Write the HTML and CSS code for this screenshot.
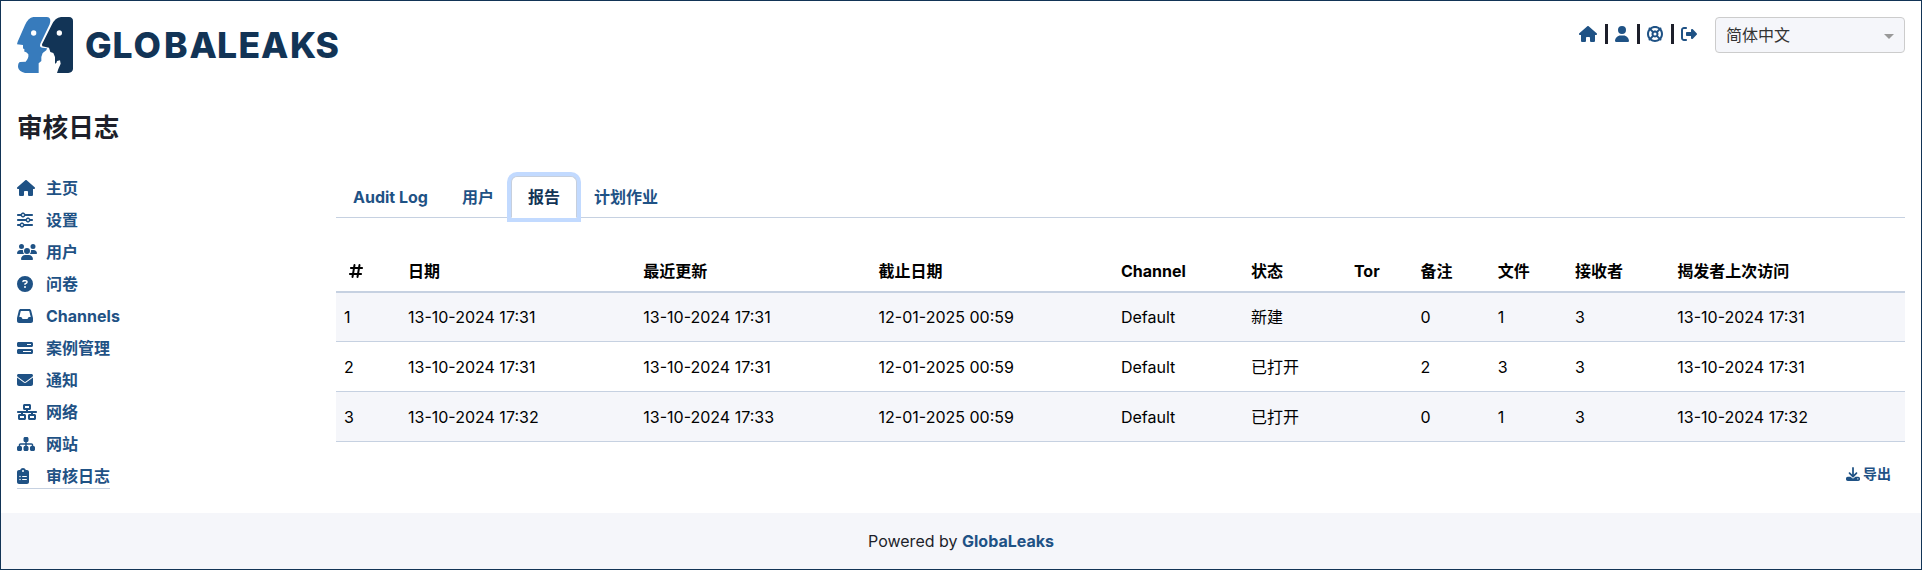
FILE: index.html
```html
<!DOCTYPE html>
<html lang="zh-CN">
<head>
<meta charset="utf-8">
<title>审核日志</title>
<link rel="stylesheet" href="styles.css">
</head>
<body>
<div class="page">
  <header class="header">
    <div class="logo">
      <svg class="logo-mark" viewBox="0 0 168 168">
        <path fill="#377bbc" d="M49 0H89Q100 0 100 12L98 22 70 80Q66 90 76 92L90 94 88 100 77 108 73 120V132L65 139V168H24Q5 164 3 150Q3 137 9 135L26 134Q36 124 34 112Q30 106 21 103L23 98 18 94V84L0 82 2 74 24 24Q34 2 49 0Z"/>
        <path fill="#123456" d="M132 0H156Q168 1 168 12V156Q167 167 154 168H120L124 156 131 140 129 130 120 132 118 138 114 140V120L109 108 100 105 96 92 76 88 75 82 80 72 104 24Q114 2 132 0Z"/>
        <circle cx="50" cy="48" r="8" fill="#fff"/><circle cx="127" cy="48" r="8" fill="#fff"/>
      </svg>
      <svg class="logo-word" viewBox="0 0 256 40"><text x="-1 26.5 47.5 78 103.5 131 152.5 175 204 229.5" y="31.5">GLOBALEAKS</text></svg>
    </div>
    <div class="tools">
      <nav class="shortcuts">
        <svg class="icon" viewBox="0 0 576 512"><use href="#house"/></svg><i class="sep"></i>
        <svg class="icon" viewBox="0 0 448 512"><path d="M224 256A128 128 0 1 0 224 0a128 128 0 1 0 0 256zm-45.7 48C79.8 304 0 383.8 0 482.3C0 498.7 13.3 512 29.7 512H418.3c16.4 0 29.7-13.3 29.7-29.7C448 383.8 368.2 304 269.7 304H178.3z"/></svg><i class="sep"></i>
        <svg class="icon" viewBox="0 0 512 512"><path d="M367.2 412.5C335.9 434.9 297.5 448 256 448s-79.9-13.1-111.2-35.5l58-58c15.8 8.6 34 13.5 53.3 13.5s37.4-4.9 53.3-13.5l58 58zm90.7 .8c33.8-43.4 54-98 54-157.3s-20.2-113.9-54-157.3c9-12.5 7.9-30.1-3.4-41.3S425.8 45 413.3 54C369.9 20.2 315.3 0 256 0S142.1 20.2 98.7 54c-12.5-9-30.1-7.9-41.3 3.4S45 86.2 54 98.7C20.2 142.1 0 196.7 0 256s20.2 113.9 54 157.3c-9 12.5-7.9 30.1 3.4 41.3S86.2 467 98.7 458c43.4 33.8 98 54 157.3 54s113.9-20.2 157.3-54c12.5 9 30.1 7.9 41.3-3.4s12.4-28.8 3.4-41.3zm-45.5-46.1l-58-58c8.6-15.8 13.5-34 13.5-53.3s-4.9-37.4-13.5-53.3l58-58C434.9 176.1 448 214.5 448 256s-13.1 79.9-35.5 111.2zM367.2 99.5l-58 58c-15.8-8.6-34-13.5-53.3-13.5s-37.4 4.9-53.3 13.5l-58-58C176.1 77.1 214.5 64 256 64s79.9 13.1 111.2 35.5zM157.5 309.3l-58 58C77.1 335.9 64 297.5 64 256s13.1-79.9 35.5-111.2l58 58c-8.6 15.8-13.5 34-13.5 53.3s4.9 37.4 13.5 53.3zM208 256a48 48 0 1 1 96 0 48 48 0 1 1 -96 0z"/></svg><i class="sep"></i>
        <svg class="icon" viewBox="0 0 512 512"><path d="M377.9 105.9L500.7 228.7c7.2 7.2 11.3 17.1 11.3 27.3s-4.1 20.1-11.3 27.3L377.9 406.1c-6.4 6.4-15 9.9-24 9.9c-18.7 0-33.9-15.2-33.9-33.9l0-62.1-128 0c-17.7 0-32-14.3-32-32l0-64c0-17.7 14.3-32 32-32l128 0 0-62.1c0-18.7 15.2-33.9 33.9-33.9c9 0 17.6 3.6 24 9.9zM160 96L96 96c-17.7 0-32 14.3-32 32l0 256c0 17.7 14.3 32 32 32l64 0c17.7 0 32 14.3 32 32s-14.3 32-32 32l-64 0c-53 0-96-43-96-96L0 128C0 75 43 32 96 32l64 0c17.7 0 32 14.3 32 32s-14.3 32-32 32z"/></svg>
      </nav>
      <div class="select"><span>简体中文</span><i class="caret"></i></div>
    </div>
  </header>
  <h1 class="title">审核日志</h1>
  <div class="main">
    <nav class="side">
      <a class="side-link"><span class="side-icon"><svg class="icon" viewBox="0 0 576 512"><path id="house" d="M575.8 255.5c0 18-15 32.1-32 32.1h-32l.7 160.2c0 2.7-.2 5.4-.5 8.1V472c0 22.1-17.9 40-40 40H456c-1.1 0-2.2 0-3.3-.1c-1.4 .1-2.8 .1-4.2 .1H416 392c-22.1 0-40-17.9-40-40V448 384c0-17.7-14.3-32-32-32H256c-17.7 0-32 14.3-32 32v64 24c0 22.1-17.9 40-40 40H160 128.1c-1.5 0-3-.1-4.5-.2c-1.2 .1-2.4 .2-3.6 .2H104c-22.1 0-40-17.9-40-40V360c0-.9 0-1.9 .1-2.8V287.6H32c-18 0-32-14-32-32.1c0-9 3-17 10-24L266.4 8c7-7 15-8 22-8s15 2 21 7L564.8 231.5c8 7 12 15 11 24z"/></svg></span>主页</a>
      <a class="side-link"><span class="side-icon"><svg class="icon" viewBox="0 0 512 512"><path d="M0 416c0 17.7 14.3 32 32 32l54.7 0c12.3 28.3 40.5 48 73.3 48s61-19.7 73.3-48L480 448c17.7 0 32-14.3 32-32s-14.3-32-32-32l-246.7 0c-12.3-28.3-40.5-48-73.3-48s-61 19.7-73.3 48L32 384c-17.7 0-32 14.3-32 32zm128 0a32 32 0 1 1 64 0 32 32 0 1 1 -64 0zM320 256a32 32 0 1 1 64 0 32 32 0 1 1 -64 0zm32-80c-32.8 0-61 19.7-73.3 48L32 224c-17.7 0-32 14.3-32 32s14.3 32 32 32l246.7 0c12.3 28.3 40.5 48 73.3 48s61-19.7 73.3-48l54.7 0c17.7 0 32-14.3 32-32s-14.3-32-32-32l-54.7 0c-12.3-28.3-40.5-48-73.3-48zM192 128a32 32 0 1 1 0-64 32 32 0 1 1 0 64zm73.3-64C253 35.7 224.8 16 192 16s-61 19.7-73.3 48L32 64C14.3 64 0 78.3 0 96s14.3 32 32 32l86.7 0c12.3 28.3 40.5 48 73.3 48s61-19.7 73.3-48L480 128c17.7 0 32-14.3 32-32s-14.3-32-32-32L265.3 64z"/></svg></span>设置</a>
      <a class="side-link"><span class="side-icon"><svg class="icon" viewBox="0 0 640 512"><path d="M144 0a80 80 0 1 1 0 160A80 80 0 1 1 144 0zM512 0a80 80 0 1 1 0 160A80 80 0 1 1 512 0zM0 298.7C0 239.8 47.8 192 106.7 192h42.7c15.9 0 31 3.5 44.6 9.7c-1.3 7.2-1.9 14.7-1.9 22.3c0 38.2 16.8 72.5 43.3 96c-.2 0-.4 0-.7 0H21.3C9.6 320 0 310.4 0 298.7zM405.3 320c-.2 0-.4 0-.7 0c26.6-23.5 43.3-57.8 43.3-96c0-7.6-.7-15-1.9-22.3c13.6-6.3 28.7-9.7 44.6-9.7h42.7C592.2 192 640 239.8 640 298.7c0 11.8-9.6 21.3-21.3 21.3H405.3zM224 224a96 96 0 1 1 192 0 96 96 0 1 1 -192 0zM128 485.3C128 411.7 187.7 352 261.3 352H378.7C452.3 352 512 411.7 512 485.3c0 14.7-11.9 26.7-26.7 26.7H154.7c-14.7 0-26.7-11.9-26.7-26.7z"/></svg></span>用户</a>
      <a class="side-link"><span class="side-icon"><svg class="icon" viewBox="0 0 512 512"><path d="M256 512A256 256 0 1 0 256 0a256 256 0 1 0 0 512zM169.8 165.3c7.9-22.3 29.1-37.3 52.8-37.3h58.3c34.9 0 63.1 28.3 63.1 63.1c0 22.6-12.1 43.5-31.7 54.8L280 264.4c-.2 13-10.9 23.6-24 23.6c-13.3 0-24-10.7-24-24V250.5c0-8.6 4.6-16.5 12.1-20.8l44.3-25.4c4.7-2.7 7.6-7.7 7.6-13.1c0-8.4-6.8-15.1-15.1-15.1H222.6c-3.4 0-6.4 2.1-7.5 5.3l-.4 1.2c-4.4 12.5-18.2 19-30.6 14.6s-19-18.2-14.6-30.6l.4-1.2zM224 352a32 32 0 1 1 64 0 32 32 0 1 1 -64 0z"/></svg></span>问卷</a>
      <a class="side-link"><span class="side-icon"><svg class="icon" viewBox="0 0 512 512"><path d="M121 32C91.6 32 66 52 58.9 80.5L1.9 308.4C.6 313.5 0 318.7 0 323.9V416c0 35.3 28.7 64 64 64H448c35.3 0 64-28.7 64-64V323.9c0-5.2-.6-10.4-1.9-15.5l-57-227.9C446 52 420.4 32 391 32H121zm0 64H391l48 192H387.8c-12.1 0-23.2 6.8-28.6 17.7l-14.3 28.6c-5.4 10.8-16.5 17.7-28.6 17.7H195.8c-12.1 0-23.2-6.8-28.6-17.7l-14.3-28.6c-5.4-10.8-16.5-17.7-28.6-17.7H73L121 96z"/></svg></span>Channels</a>
      <a class="side-link"><span class="side-icon"><svg class="icon" viewBox="0 0 512 512"><path d="M448 160H320V128H448v32zM48 64C21.5 64 0 85.5 0 112v64c0 26.5 21.5 48 48 48H464c26.5 0 48-21.5 48-48V112c0-26.5-21.5-48-48-48H48zM448 352v32H192V352H448zM48 288c-26.5 0-48 21.5-48 48v64c0 26.5 21.5 48 48 48H464c26.5 0 48-21.5 48-48V336c0-26.5-21.5-48-48-48H48z" fill-rule="evenodd"/></svg></span>案例管理</a>
      <a class="side-link"><span class="side-icon"><svg class="icon" viewBox="0 0 512 512"><path d="M48 64C21.5 64 0 85.5 0 112c0 15.1 7.1 29.3 19.2 38.4L236.8 313.6c11.4 8.5 27 8.5 38.4 0L492.8 150.4c12.1-9.1 19.2-23.3 19.2-38.4c0-26.5-21.5-48-48-48H48zM0 176V384c0 35.3 28.7 64 64 64H448c35.3 0 64-28.7 64-64V176L294.4 339.2c-22.8 17.1-54 17.1-76.8 0L0 176z"/></svg></span>通知</a>
      <a class="side-link"><span class="side-icon"><svg class="icon" viewBox="0 0 640 512"><path d="M256 64H384v64H256V64zM240 0c-26.5 0-48 21.5-48 48v96c0 26.5 21.5 48 48 48h48v32H32c-17.7 0-32 14.3-32 32s14.3 32 32 32h96v32H80c-26.5 0-48 21.5-48 48v96c0 26.5 21.5 48 48 48H240c26.5 0 48-21.5 48-48V368c0-26.5-21.5-48-48-48H192V288H448v32H400c-26.5 0-48 21.5-48 48v96c0 26.5 21.5 48 48 48H560c26.5 0 48-21.5 48-48V368c0-26.5-21.5-48-48-48H512V288h96c17.7 0 32-14.3 32-32s-14.3-32-32-32H352V192h48c26.5 0 48-21.5 48-48V48c0-26.5-21.5-48-48-48H240zM96 448V384H224v64H96zm320-64H544v64H416V384z" fill-rule="evenodd"/></svg></span>网络</a>
      <a class="side-link"><span class="side-icon"><svg class="icon" viewBox="0 0 576 512"><path d="M208 80c0-26.5 21.5-48 48-48h64c26.5 0 48 21.5 48 48v64c0 26.5-21.5 48-48 48h-8v40H464c30.9 0 56 25.1 56 56v32h8c26.5 0 48 21.5 48 48v64c0 26.5-21.5 48-48 48H464c-26.5 0-48-21.5-48-48V368c0-26.5 21.5-48 48-48h8V288c0-4.4-3.6-8-8-8H312v40h8c26.5 0 48 21.5 48 48v64c0 26.5-21.5 48-48 48H256c-26.5 0-48-21.5-48-48V368c0-26.5 21.5-48 48-48h8V280H112c-4.4 0-8 3.6-8 8v32h8c26.5 0 48 21.5 48 48v64c0 26.5-21.5 48-48 48H48c-26.5 0-48-21.5-48-48V368c0-26.5 21.5-48 48-48h8V288c0-30.9 25.1-56 56-56H264V192h-8c-26.5 0-48-21.5-48-48V80z"/></svg></span>网站</a>
      <a class="side-link current"><span class="side-icon"><svg class="icon" viewBox="0 0 384 512"><path d="M192 0c-41.8 0-77.4 26.7-90.5 64H64C28.7 64 0 92.7 0 128V448c0 35.3 28.7 64 64 64H320c35.3 0 64-28.7 64-64V128c0-35.3-28.7-64-64-64H282.5C269.4 26.7 233.8 0 192 0zm0 64a32 32 0 1 1 0 64 32 32 0 1 1 0-64zM72 272a24 24 0 1 1 48 0 24 24 0 1 1 -48 0zm104-16H304c8.8 0 16 7.2 16 16s-7.2 16-16 16H176c-8.8 0-16-7.2-16-16s7.2-16 16-16zM72 368a24 24 0 1 1 48 0 24 24 0 1 1 -48 0zm88 0c0-8.8 7.2-16 16-16H304c8.8 0 16 7.2 16 16s-7.2 16-16 16H176c-8.8 0-16-7.2-16-16z"/></svg></span>审核日志</a>
    </nav>
    <section class="content">
      <div class="tabs">
        <a class="tab">Audit Log</a><a class="tab">用户</a><a class="tab active">报告</a><a class="tab">计划作业</a>
      </div>
      <table class="table">
        <colgroup><col class="c-id"><col class="c-date"><col class="c-date"><col class="c-exp"><col class="c-channel"><col class="c-status"><col class="c-tor"><col class="c-num"><col class="c-num"><col class="c-rec"><col></colgroup>
        <thead><tr><th><svg class="icon hash" viewBox="0 0 448 512"><path d="M181.3 32.4c17.4 2.9 29.2 19.4 26.3 36.8L197.8 128h95.1l11.5-69.3c2.9-17.4 19.4-29.2 36.8-26.3s29.2 19.4 26.3 36.8L357.8 128H416c17.7 0 32 14.3 32 32s-14.3 32-32 32H347.1L325.8 320H384c17.7 0 32 14.3 32 32s-14.3 32-32 32H315.1l-11.5 69.3c-2.9 17.4-19.4 29.2-36.8 26.3s-29.2-19.4-26.3-36.8l9.8-58.7H155.1l-11.5 69.3c-2.9 17.4-19.4 29.2-36.8 26.3s-29.2-19.4-26.3-36.8L90.2 384H32c-17.7 0-32-14.3-32-32s14.3-32 32-32h68.9l21.3-128H64c-17.7 0-32-14.3-32-32s14.3-32 32-32h68.9l11.5-69.3c2.9-17.4 19.4-29.2 36.8-26.3zM187.1 192L165.8 320h95.1l21.3-128H187.1z"/></svg></th><th>日期</th><th>最近更新</th><th>截止日期</th><th>Channel</th><th>状态</th><th>Tor</th><th>备注</th><th>文件</th><th>接收者</th><th>揭发者上次访问</th></tr></thead>
        <tbody>
          <tr><td>1</td><td>13-10-2024 17:31</td><td>13-10-2024 17:31</td><td>12-01-2025 00:59</td><td>Default</td><td>新建</td><td></td><td>0</td><td>1</td><td>3</td><td>13-10-2024 17:31</td></tr>
          <tr><td>2</td><td>13-10-2024 17:31</td><td>13-10-2024 17:31</td><td>12-01-2025 00:59</td><td>Default</td><td>已打开</td><td></td><td>2</td><td>3</td><td>3</td><td>13-10-2024 17:31</td></tr>
          <tr><td>3</td><td>13-10-2024 17:32</td><td>13-10-2024 17:33</td><td>12-01-2025 00:59</td><td>Default</td><td>已打开</td><td></td><td>0</td><td>1</td><td>3</td><td>13-10-2024 17:32</td></tr>
        </tbody>
      </table>
      <div class="actions"><a class="export"><svg class="icon" viewBox="0 0 512 512"><path d="M288 32c0-17.7-14.3-32-32-32s-32 14.3-32 32V274.7l-73.4-73.4c-12.5-12.5-32.8-12.5-45.3 0s-12.5 32.8 0 45.3l128 128c12.5 12.5 32.8 12.5 45.3 0l128-128c12.5-12.5 12.5-32.8 0-45.3s-32.8-12.5-45.3 0L288 274.7V32zM64 352c-35.3 0-64 28.7-64 64v32c0 35.3 28.7 64 64 64H448c35.3 0 64-28.7 64-64V416c0-35.3-28.7-64-64-64H346.5l-45.3 45.3c-25 25-65.5 25-90.5 0L165.5 352H64zm368 56a24 24 0 1 1 0 48 24 24 0 1 1 0-48z"/></svg>导出</a></div>
    </section>
  </div>
  <footer class="footer"><span>Powered by <b class="brand">GlobaLeaks</b></span></footer>
</div>
</body>
</html>
```
FILE: styles.css
```css
* { box-sizing: border-box; }
body {
  margin: 0;
  font: 16px/24px Inter, "Noto Sans CJK SC", sans-serif;
  color: #1d1f2a;
  background: #fff;
}
.page {
  height: 570px;
  overflow: hidden;
  border: 1px solid #123456;
  display: flex;
  flex-direction: column;
}
.icon { height: 1em; width: auto; display: block; fill: currentColor; flex: none; }
.header { display: flex; justify-content: space-between; padding: 16px 16px 0; height: 96px; flex: none; }
.logo { display: flex; align-items: flex-start; }
.logo-mark { width: 56px; height: 56px; }
.logo-word { width: 256px; height: 40px; margin: 9px 0 0 13px; overflow: visible; }
.logo-word text { font: 800 35.5px Inter, sans-serif; fill: #123456; }
.tools { display: flex; align-items: flex-start; }
.shortcuts { display: flex; align-items: center; color: #1f5285; height: 34px; margin-right: 18px; }
.sep { width: 3px; height: 20px; background: #1d1f2a; margin: 0 7.5px; }
.select {
  width: 190px; height: 36px;
  border: 1px solid #ccc; border-radius: 4px;
  background: #f5f6fa; color: #333;
  display: flex; align-items: center; justify-content: space-between;
  padding: 0 10px;
}
.caret { border: 5px solid transparent; border-top-color: #999; border-bottom: 0; margin-top: 2px; }
.title { margin: 15px 16px 0; font-size: 25.6px; line-height: 31px; font-weight: 600; flex: none; }
.main { display: flex; padding: 0 16px; flex: 1; }
.side { width: 319px; padding-top: 29px; display: flex; flex-direction: column; align-items: flex-start; flex: none; }
.side-link { display: flex; align-items: center; height: 32px; font-weight: 700; color: #1f5285; }
.side-icon { width: 29px; }
.current { height: 29px; padding-top: 4px; border-bottom: 1px solid #c6d1e1; }
.content { flex: 1; padding-top: 33px; }
.tabs { display: flex; height: 42px; border-bottom: 1px solid #c6d1e1; }
.tab {
  height: 42px; padding: 8px 16px; border: 1px solid transparent;
  font-weight: 700; color: #1f5285; white-space: nowrap;
}
.active {
  color: #123456; background: #fff;
  border-color: #c6cfdd #c6cfdd #fff; border-radius: 6px 6px 0 0;
  box-shadow: 0 0 0 4px #c2daff;
}
.table { width: 1569px; table-layout: fixed; border-collapse: separate; border-spacing: 0; margin-top: 32px; color: #000; }
.table th, .table td { text-align: left; padding: 0 8px; white-space: nowrap; }
.table th { height: 43px; font-weight: 700; border-bottom: 2px solid #c6d1e1; }
.table td { height: 50px; border-bottom: 1px solid #c6d1e1; }
.table tbody tr:first-child td { height: 49px; }
.table tbody tr:nth-child(odd) { background: #f5f6fa; }
.hash { margin-left: 5px; }
.c-id { width: 64px; }
.c-date { width: 235.3px; }
.c-exp { width: 242.3px; }
.c-channel { width: 130px; }
.c-status { width: 103px; }
.c-tor { width: 66.5px; }
.c-num { width: 77.3px; }
.c-rec { width: 102.3px; }
.actions { display: flex; justify-content: flex-end; padding: 21px 14px 0; }
.export { display: flex; align-items: center; gap: 3px; font-size: 14px; line-height: 21px; font-weight: 700; color: #1f5285; }
.footer { height: 56px; background: #f5f6fa; display: flex; align-items: center; justify-content: center; flex: none; }
.brand { font-weight: 700; color: #1f5285; }
```
